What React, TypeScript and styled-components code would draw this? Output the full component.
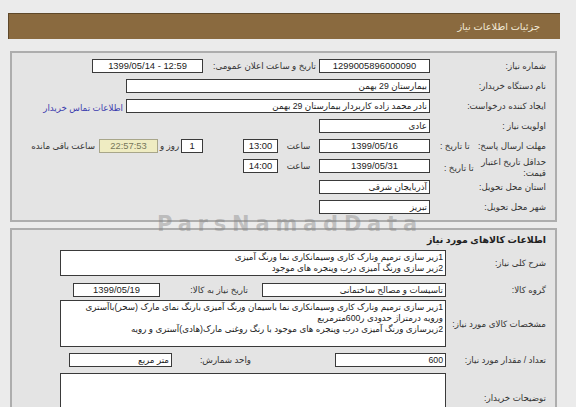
import * as React from 'react';
import styled, { createGlobalStyle } from 'styled-components';

const GlobalStyle = createGlobalStyle`
  html, body {
    margin: 0;
    padding: 0;
    background: #ebebeb;
  }
  body {
    font-family: "Liberation Sans", "DejaVu Sans", sans-serif;
    font-size: 8.7px;
    color: #333;
  }
`;

const Page = styled.div`
  position: relative;
  direction: rtl;
  width: 576px;
  height: 407px;
  overflow: hidden;
  box-sizing: border-box;
  padding: 13px 16px 0 8px;
`;

const Header = styled.div`
  display: flex;
  align-items: center;
  height: 26px;
  box-sizing: border-box;
  padding-right: 20px;
  background: #8a6a3f;
  border-top: 1px solid #5e482a;
  border-left: 1px solid #5e482a;
`;

const HeaderTitle = styled.span`
  color: #f3ead8;
  font-size: 9.8px;
`;

const Panel = styled.div<{ $top: number }>`
  margin: ${p => p.$top}px 3px 0 2px;
  border: 2px solid #adadad;
  background: #e4e4e4;
  padding: 6px 9px 0 0;
  box-sizing: border-box;
`;

const PanelTitle = styled.div`
  height: 14px;
  line-height: 14px;
  margin: -3px 0 3px;
  font-weight: bold;
  font-size: 9.4px;
  color: #222;
`;

const Row = styled.div<{ $h?: number; $center?: boolean; $mb?: number }>`
  display: flex;
  align-items: ${p => (p.$center ? 'center' : 'flex-start')};
  height: ${p => (p.$h ? `${p.$h}px` : 'auto')};
  margin-bottom: ${p => p.$mb ?? 0}px;
`;

const Label = styled.div<{ $w: number }>`
  flex: 0 0 ${p => p.$w}px;
  line-height: 14px;
  white-space: nowrap;
  color: #333;
`;

const SplitLabel = styled.div<{ $w: number; $padLeft: number; $mt?: number }>`
  flex: 0 0 ${p => p.$w}px;
  box-sizing: border-box;
  display: flex;
  align-items: center;
  justify-content: space-between;
  padding-left: ${p => p.$padLeft}px;
  margin-top: ${p => p.$mt ?? 0}px;
  white-space: nowrap;
  line-height: 14px;
`;

const Stacked = styled.span`
  line-height: 11px;
`;

const Caption = styled.div<{ $w?: number; $pad?: number; $align?: string }>`
  flex: 0 0 ${p => (p.$w ? `${p.$w}px` : 'auto')};
  box-sizing: border-box;
  padding-right: ${p => p.$pad ?? 0}px;
  text-align: ${p => p.$align ?? 'right'};
  line-height: 14px;
  white-space: nowrap;
`;

const Spacer = styled.div<{ $w: number }>`
  flex: 0 0 ${p => p.$w}px;
`;

const Field = styled.div<{ $w: number; $align?: string; $ltr?: boolean; $warn?: boolean }>`
  flex: 0 0 ${p => p.$w}px;
  height: 14px;
  box-sizing: border-box;
  padding: 0 2px;
  border: 1px solid ${p => (p.$warn ? '#a8a68a' : '#3a3a3a')};
  background: ${p => (p.$warn ? '#efecc2' : '#fff')};
  color: ${p => (p.$warn ? '#77775a' : '#222')};
  direction: ${p => (p.$ltr ? 'ltr' : 'rtl')};
  text-align: ${p => p.$align ?? 'right'};
  font-size: ${p => (p.$ltr ? '9.4px' : '8.7px')};
  line-height: 12px;
  white-space: nowrap;
  overflow: hidden;
`;

const TextBox = styled.div<{ $w: number; $h: number }>`
  flex: 0 0 ${p => p.$w}px;
  height: ${p => p.$h}px;
  box-sizing: border-box;
  padding: 1px 2px;
  border: 1px solid #3a3a3a;
  background: #fff;
  color: #222;
  line-height: 11px;
  white-space: pre-line;
  overflow: hidden;
`;

const ContactLink = styled.a`
  margin: 3px 3px 0 0;
  line-height: 12px;
  color: #3c3cae;
  text-decoration: none;
  white-space: nowrap;
`;

const Watermark = styled.div`
  position: absolute;
  left: 157px;
  top: 215px;
  direction: ltr;
  font-family: "DejaVu Sans", sans-serif;
  font-weight: bold;
  font-size: 21px;
  line-height: 18px;
  letter-spacing: 5.8px;
  color: rgba(130, 130, 130, 0.42);
  pointer-events: none;
`;

export default function App() {
  return (
    <>
      <GlobalStyle />
      <Page>
        <Header>
          <HeaderTitle>جزئیات اطلاعات نیاز</HeaderTitle>
        </Header>

        <Panel $top={12}>
          <Row $h={20}>
            <Label $w={116}>شماره نیاز:</Label>
            <Field $w={111} $align="center" $ltr>1299005896000090</Field>
            <Caption $w={116} $pad={3}>تاریخ و ساعت اعلان عمومی:</Caption>
            <Field $w={111} $align="center" $ltr>1399/05/14 - 12:59</Field>
          </Row>
          <Row $h={20}>
            <Label $w={116}>نام دستگاه خریدار:</Label>
            <Field $w={304}>بیمارستان 29 بهمن</Field>
          </Row>
          <Row $h={20}>
            <Label $w={116}>ایجاد کننده درخواست:</Label>
            <Field $w={304}>نادر محمد زاده کاربردار بیمارستان 29 بهمن</Field>
            <ContactLink href="#">اطلاعات تماس خریدار</ContactLink>
          </Row>
          <Row $h={20}>
            <Label $w={116}>اولویت نیاز :</Label>
            <Field $w={111}>عادی</Field>
          </Row>
          <Row $h={20}>
            <SplitLabel $w={116} $padLeft={10}>
              <span>مهلت ارسال پاسخ:</span>
              <span>تا تاریخ :</span>
            </SplitLabel>
            <Field $w={111} $align="center" $ltr>1399/05/16</Field>
            <Caption $w={41} $align="center">ساعت</Caption>
            <Field $w={35} $align="center" $ltr>13:00</Field>
            <Spacer $w={40} />
            <Field $w={22} $align="center" $ltr>1</Field>
            <Caption $w={23} $align="center">روز و</Caption>
            <Field $w={59} $align="center" $ltr $warn>22:57:53</Field>
            <Caption $pad={4}>ساعت باقی مانده</Caption>
          </Row>
          <Row $h={21}>
            <SplitLabel $w={116} $padLeft={14} $mt={-2}>
              <Stacked>
                حداقل تاریخ اعتبار
                <br />
                قیمت:
              </Stacked>
              <span>تا تاریخ :</span>
            </SplitLabel>
            <Field $w={111} $align="center" $ltr>1399/05/31</Field>
            <Caption $w={41} $align="center">ساعت</Caption>
            <Field $w={35} $align="center" $ltr>14:00</Field>
          </Row>
          <Row $h={20}>
            <Label $w={116}>استان محل تحویل:</Label>
            <Field $w={111}>آذربایجان شرقی</Field>
          </Row>
          <Row $h={20}>
            <Label $w={116}>شهر محل تحویل:</Label>
            <Field $w={111}>تبریز</Field>
          </Row>
        </Panel>

        <Panel $top={6}>
          <PanelTitle>اطلاعات کالاهای مورد نیاز</PanelTitle>
          <Row $center $mb={7}>
            <Label $w={100}>شرح کلی نیاز:</Label>
            <TextBox $w={386} $h={26}>
              {'1زیر سازی ترمیم ونارک کاری وسیمانکاری نما ورنگ آمیزی\n2زیر سازی ورنگ آمیزی درب وپنجره های موجود'}
            </TextBox>
          </Row>
          <Row $center $mb={3}>
            <Label $w={100}>گروه کالا:</Label>
            <Field $w={184}>تاسیسات و مصالح ساختمانی</Field>
            <Caption $w={102} $pad={14}>تاریخ نیاز به کالا:</Caption>
            <Field $w={87} $align="center" $ltr>1399/05/19</Field>
          </Row>
          <Row $center $mb={6}>
            <Label $w={100}>مشخصات کالای مورد نیاز:</Label>
            <TextBox $w={386} $h={47}>
              {'1زیر سازی ترمیم ونارک کاری وسیمانکاری نما باسیمان ورنگ آمیزی بارنگ نمای مارک (سحر)باآستری\nورویه درمتراژ حدودی ر600مترمربع\n2زیرسازی ورنگ آمیزی درب وپنجره های موجود با رنگ روغنی مارک(هادی)آستری و رویه'}
            </TextBox>
          </Row>
          <Row $center $mb={6}>
            <Label $w={100}>تعداد / مقدار مورد نیاز:</Label>
            <Field $w={111}>600</Field>
            <Caption $w={163} $pad={84}>واحد شمارش:</Caption>
            <Field $w={103}>متر مربع</Field>
          </Row>
          <Row $center>
            <Label $w={100}>توضیحات خریدار:</Label>
            <TextBox $w={386} $h={50} />
          </Row>
        </Panel>

        <Watermark>ParsNamadData</Watermark>
      </Page>
    </>
  );
}
